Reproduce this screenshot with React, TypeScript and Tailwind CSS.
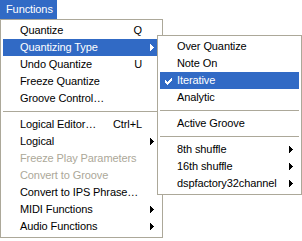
import React from "react";

const Arrow = ({ white }: { white?: boolean }) => (
  <svg width="4" height="7" viewBox="0 0 4 7" shapeRendering="crispEdges" className="block">
    <path d="M0 0h1v7h-1z M1 1h1v5h-1z M2 2h1v3h-1z M3 3h1v1h-1z" fill={white ? "#ffffff" : "#000000"} />
  </svg>
);

const Check = () => (
  <svg width="7" height="7" viewBox="0 0 7 7" shapeRendering="crispEdges" className="block">
    <path
      d="M6 0h1v1h-1z M5 1h2v1h-2z M0 2h1v1h-1z M4 2h3v1h-3z M0 3h2v1h-2z M3 3h3v1h-3z M0 4h5v1h-5z M1 5h3v1h-3z M2 6h1v1h-1z"
      fill="#ffffff"
    />
  </svg>
);

type Item =
  | { sep: true }
  | {
      sep?: false;
      label: string;
      shortcut?: string;
      sub?: boolean;
      active?: boolean;
      disabled?: boolean;
      checked?: boolean;
    };

const Row = ({ item }: { item: Item }) => {
  if (item.sep) {
    return (
      <div className="py-[4px]">
        <div className="h-[1px] bg-[#ACA899]" />
      </div>
    );
  }
  const textColor = item.active ? "text-white" : item.disabled ? "text-[#ACA899]" : "text-black";
  return (
    <div
      className={`relative flex items-center h-[17px] pl-[17px] pr-[6px] ${
        item.active ? "bg-[#316AC5]" : ""
      } ${textColor}`}
    >
      {item.checked && (
        <div className="absolute left-[5px] top-[6px]">
          <Check />
        </div>
      )}
      <span className="flex-1 whitespace-nowrap leading-[17px]">{item.label}</span>
      {item.shortcut && <span className="mr-[8px] whitespace-nowrap leading-[17px]">{item.shortcut}</span>}
      <div className="w-[4px] flex items-center">{item.sub && <Arrow white={item.active} />}</div>
    </div>
  );
};

const mainItems: Item[] = [
  { label: "Quantize", shortcut: "Q" },
  { label: "Quantizing Type", sub: true, active: true },
  { label: "Undo Quantize", shortcut: "U" },
  { label: "Freeze Quantize" },
  { label: "Groove Control…" },
  { sep: true },
  { label: "Logical Editor…", shortcut: "Ctrl+L" },
  { label: "Logical", sub: true },
  { label: "Freeze Play Parameters", disabled: true },
  { label: "Convert to Groove", disabled: true },
  { label: "Convert to IPS Phrase…" },
  { label: "MIDI Functions", sub: true },
  { label: "Audio Functions", sub: true },
];

const subItems: Item[] = [
  { label: "Over Quantize" },
  { label: "Note On" },
  { label: "Iterative", active: true, checked: true },
  { label: "Analytic" },
  { sep: true },
  { label: "Active Groove" },
  { sep: true },
  { label: "8th shuffle", sub: true },
  { label: "16th shuffle", sub: true },
  { label: "dspfactory32channel", sub: true },
];

export default function App() {
  return (
    <div
      className="relative w-[302px] h-[241px] bg-white overflow-hidden text-[11px] tracking-[-0.1px]"
      style={{ fontFamily: '"Liberation Sans", Arial, sans-serif' }}
    >
      <div className="w-[57px] h-[19px] bg-[#316AC5] text-white pl-[6px] leading-[19px]">Functions</div>
      <div className="w-[163px] border border-[#ACA899] bg-white p-[2px]">
        {mainItems.map((it, i) => (
          <Row key={i} item={it} />
        ))}
      </div>
      <div className="absolute left-[157px] top-[35px] w-[145px] border border-[#ACA899] bg-white p-[2px]">
        {subItems.map((it, i) => (
          <Row key={i} item={it} />
        ))}
      </div>
    </div>
  );
}
